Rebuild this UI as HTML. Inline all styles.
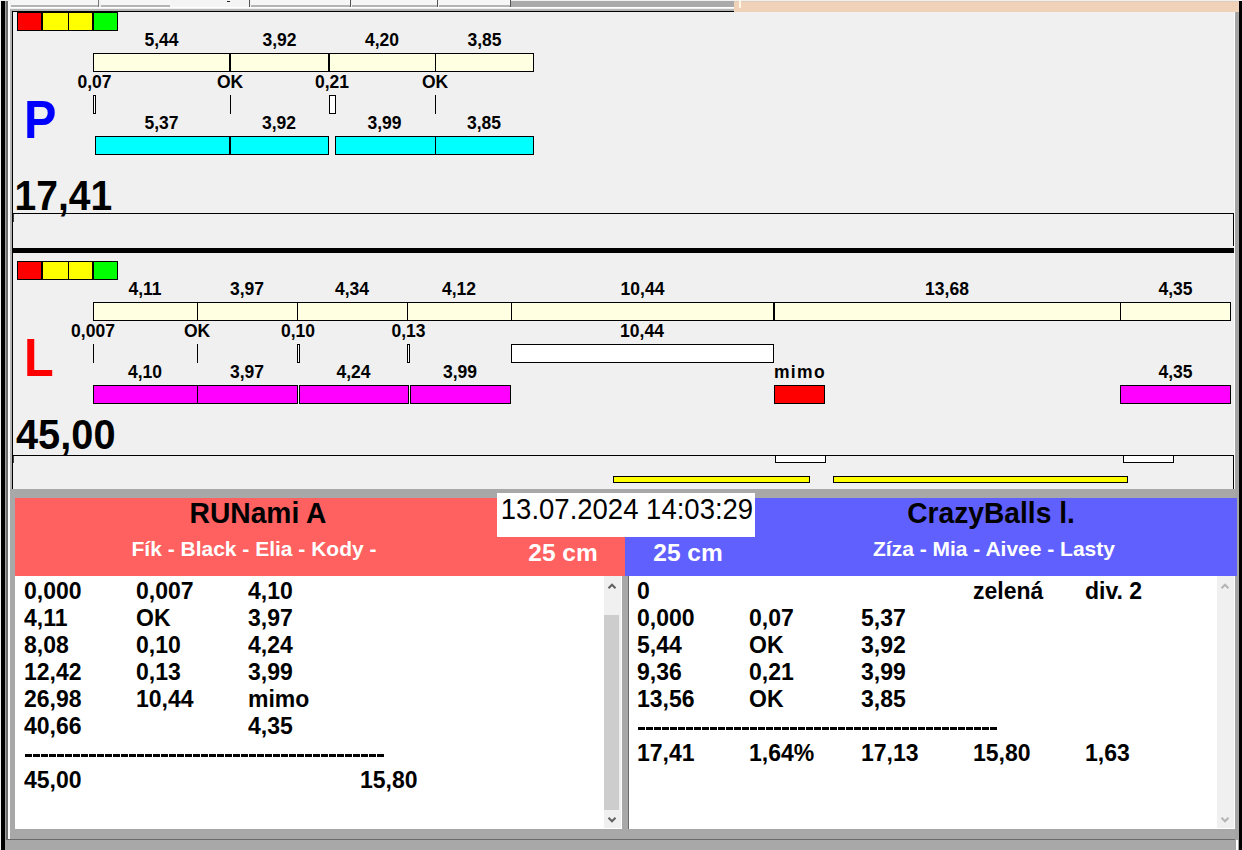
<!DOCTYPE html>
<html><head><meta charset="utf-8"><style>
html,body{margin:0;padding:0;}
body{width:1242px;height:850px;overflow:hidden;position:relative;background:#f0f0f0;font-family:"Liberation Sans", sans-serif;}
body>div,body>svg{position:absolute;}
.t{white-space:pre;}
</style></head><body>
<div style="left:0px;top:0px;width:1242px;height:850px;background:#f0f0f0;"></div>
<div style="left:0px;top:0px;width:1242px;height:7px;background:#f0f0f0;"></div>
<div style="left:11px;top:0px;width:87px;height:5px;background:#f6f6f6;"></div>
<div style="left:11px;top:5px;width:87px;height:2px;background:#b4b4b4;"></div>
<div style="left:101px;top:0px;width:69px;height:5px;background:#f6f6f6;"></div>
<div style="left:101px;top:5px;width:69px;height:2px;background:#b4b4b4;"></div>
<div style="left:251px;top:0px;width:99px;height:5px;background:#f6f6f6;"></div>
<div style="left:251px;top:5px;width:99px;height:2px;background:#b4b4b4;"></div>
<div style="left:352px;top:0px;width:85px;height:5px;background:#f6f6f6;"></div>
<div style="left:352px;top:5px;width:85px;height:2px;background:#b4b4b4;"></div>
<div style="left:439px;top:0px;width:71px;height:5px;background:#f6f6f6;"></div>
<div style="left:439px;top:5px;width:71px;height:2px;background:#b4b4b4;"></div>
<div style="left:98px;top:0px;width:1px;height:7px;background:#777;"></div>
<div style="left:170px;top:0px;width:80px;height:7px;background:#f4f4f4;"></div>
<div style="left:249px;top:0px;width:1px;height:7px;background:#555;"></div>
<div style="left:227px;top:1px;width:3px;height:1px;background:#222;"></div>
<div style="left:350px;top:0px;width:1px;height:7px;background:#555;"></div>
<div style="left:437px;top:0px;width:1px;height:7px;background:#555;"></div>
<div style="left:510px;top:0px;width:1px;height:7px;background:#555;"></div>
<div style="left:511px;top:1px;width:223px;height:6px;background:#aaaaaa;"></div>
<div style="left:9px;top:7px;width:725px;height:1px;background:#ffffff;"></div>
<div style="left:9px;top:9px;width:725px;height:2px;background:#b4b4b4;"></div>
<div style="left:12px;top:11px;width:722px;height:1px;background:#000;"></div>
<div style="left:734px;top:1px;width:505px;height:11px;background:#f0d2b8;"></div>
<div style="left:734px;top:1px;width:505px;height:1px;background:#e0cdb8;"></div>
<div style="left:739px;top:0px;width:2px;height:8px;background:#fff6e6;"></div>
<div style="left:1px;top:1px;width:4px;height:849px;background:#000;"></div>
<div style="left:5px;top:1px;width:1px;height:849px;background:#a0a0a0;"></div>
<div style="left:6px;top:1px;width:2px;height:849px;background:#6e6e6e;"></div>
<div style="left:8px;top:1px;width:2px;height:849px;background:#ffffff;"></div>
<div style="left:10px;top:9px;width:2px;height:480px;background:#b4b4b4;"></div>
<div style="left:12px;top:11px;width:1px;height:478px;background:#000;"></div>
<div style="left:1234px;top:12px;width:1px;height:838px;background:#ffffff;"></div>
<div style="left:1235px;top:12px;width:4px;height:838px;background:#a4a4a4;"></div>
<div style="left:1239px;top:1px;width:3px;height:849px;background:#000;"></div>
<div style="left:17px;top:12px;width:25px;height:19px;background:#ff0000;border:1px solid #000;box-sizing:border-box;"></div>
<div style="left:42px;top:12px;width:27px;height:19px;background:#ffff00;border:1px solid #000;box-sizing:border-box;"></div>
<div style="left:68px;top:12px;width:25px;height:19px;background:#ffff00;border:1px solid #000;box-sizing:border-box;"></div>
<div style="left:93px;top:12px;width:25px;height:19px;background:#00ff00;border:1px solid #000;box-sizing:border-box;"></div>
<div style="left:93px;top:53px;width:441px;height:19px;background:#ffffe1;border:1px solid #000;box-sizing:border-box;"></div>
<div style="left:229px;top:53px;width:2px;height:19px;background:#000;"></div>
<div style="left:328px;top:53px;width:2px;height:19px;background:#000;"></div>
<div style="left:435px;top:53px;width:1px;height:19px;background:#000;"></div>
<div class="t" style="left:11.50px;top:31.79px;font-size:17.5px;line-height:17.5px;color:#000;font-weight:bold;width:300px;text-align:center;">5,44</div>
<div class="t" style="left:129.50px;top:31.79px;font-size:17.5px;line-height:17.5px;color:#000;font-weight:bold;width:300px;text-align:center;">3,92</div>
<div class="t" style="left:232.00px;top:31.79px;font-size:17.5px;line-height:17.5px;color:#000;font-weight:bold;width:300px;text-align:center;">4,20</div>
<div class="t" style="left:334.50px;top:31.79px;font-size:17.5px;line-height:17.5px;color:#000;font-weight:bold;width:300px;text-align:center;">3,85</div>
<div class="t" style="left:-55.50px;top:73.79px;font-size:17.5px;line-height:17.5px;color:#000;font-weight:bold;width:300px;text-align:center;">0,07</div>
<div class="t" style="left:80.00px;top:73.79px;font-size:17.5px;line-height:17.5px;color:#000;font-weight:bold;width:300px;text-align:center;">OK</div>
<div class="t" style="left:182.00px;top:73.79px;font-size:17.5px;line-height:17.5px;color:#000;font-weight:bold;width:300px;text-align:center;">0,21</div>
<div class="t" style="left:285.00px;top:73.79px;font-size:17.5px;line-height:17.5px;color:#000;font-weight:bold;width:300px;text-align:center;">OK</div>
<div style="left:93px;top:95px;width:3px;height:19px;background:#fff;border:1px solid #000;box-sizing:border-box;"></div>
<div style="left:230px;top:95px;width:1px;height:19px;background:#000;"></div>
<div style="left:329px;top:95px;width:7px;height:19px;background:#fff;border:1px solid #000;box-sizing:border-box;"></div>
<div style="left:435px;top:95px;width:1px;height:19px;background:#000;"></div>
<div class="t" style="left:11.50px;top:114.79px;font-size:17.5px;line-height:17.5px;color:#000;font-weight:bold;width:300px;text-align:center;">5,37</div>
<div class="t" style="left:129.00px;top:114.79px;font-size:17.5px;line-height:17.5px;color:#000;font-weight:bold;width:300px;text-align:center;">3,92</div>
<div class="t" style="left:234.50px;top:114.79px;font-size:17.5px;line-height:17.5px;color:#000;font-weight:bold;width:300px;text-align:center;">3,99</div>
<div class="t" style="left:334.00px;top:114.79px;font-size:17.5px;line-height:17.5px;color:#000;font-weight:bold;width:300px;text-align:center;">3,85</div>
<div style="left:95px;top:136px;width:234px;height:19px;background:#00ffff;border:1px solid #000;box-sizing:border-box;"></div>
<div style="left:229px;top:136px;width:2px;height:19px;background:#000;"></div>
<div style="left:335px;top:136px;width:199px;height:19px;background:#00ffff;border:1px solid #000;box-sizing:border-box;"></div>
<div style="left:435px;top:136px;width:1px;height:19px;background:#000;"></div>
<div class="t" style="left:23.50px;top:92.29px;font-size:54px;line-height:54px;color:#0000ff;font-weight:bold;transform:scale(0.9,1);transform-origin:0 45.71px;">P</div>
<div class="t" style="left:14.50px;top:176.99px;font-size:39px;line-height:39px;color:#000;font-weight:bold;transform:scale(1.0,1.07);transform-origin:0 33.01px;">17,41</div>
<div style="left:13px;top:213px;width:1221px;height:1px;background:#000;"></div>
<div style="left:1233px;top:213px;width:1px;height:33px;background:#000;"></div>
<div style="left:13px;top:214px;width:1px;height:8px;background:#444;"></div>
<div style="left:13px;top:248px;width:1221px;height:5px;background:#000;"></div>
<div style="left:17px;top:261px;width:25px;height:19px;background:#ff0000;border:1px solid #000;box-sizing:border-box;"></div>
<div style="left:42px;top:261px;width:27px;height:19px;background:#ffff00;border:1px solid #000;box-sizing:border-box;"></div>
<div style="left:68px;top:261px;width:25px;height:19px;background:#ffff00;border:1px solid #000;box-sizing:border-box;"></div>
<div style="left:93px;top:261px;width:25px;height:19px;background:#00ff00;border:1px solid #000;box-sizing:border-box;"></div>
<div style="left:93px;top:302px;width:1138px;height:19px;background:#ffffe1;border:1px solid #000;box-sizing:border-box;"></div>
<div style="left:197px;top:302px;width:1px;height:19px;background:#000;"></div>
<div style="left:297px;top:302px;width:1px;height:19px;background:#000;"></div>
<div style="left:407px;top:302px;width:1px;height:19px;background:#000;"></div>
<div style="left:511px;top:302px;width:1px;height:19px;background:#000;"></div>
<div style="left:1120px;top:302px;width:1px;height:19px;background:#000;"></div>
<div style="left:773px;top:302px;width:2px;height:19px;background:#000;"></div>
<div class="t" style="left:-5.00px;top:280.79px;font-size:17.5px;line-height:17.5px;color:#000;font-weight:bold;width:300px;text-align:center;">4,11</div>
<div class="t" style="left:97.00px;top:280.79px;font-size:17.5px;line-height:17.5px;color:#000;font-weight:bold;width:300px;text-align:center;">3,97</div>
<div class="t" style="left:202.00px;top:280.79px;font-size:17.5px;line-height:17.5px;color:#000;font-weight:bold;width:300px;text-align:center;">4,34</div>
<div class="t" style="left:309.00px;top:280.79px;font-size:17.5px;line-height:17.5px;color:#000;font-weight:bold;width:300px;text-align:center;">4,12</div>
<div class="t" style="left:492.50px;top:280.79px;font-size:17.5px;line-height:17.5px;color:#000;font-weight:bold;width:300px;text-align:center;">10,44</div>
<div class="t" style="left:797.00px;top:280.79px;font-size:17.5px;line-height:17.5px;color:#000;font-weight:bold;width:300px;text-align:center;">13,68</div>
<div class="t" style="left:1025.50px;top:280.79px;font-size:17.5px;line-height:17.5px;color:#000;font-weight:bold;width:300px;text-align:center;">4,35</div>
<div class="t" style="left:-57.00px;top:322.79px;font-size:17.5px;line-height:17.5px;color:#000;font-weight:bold;width:300px;text-align:center;">0,007</div>
<div class="t" style="left:47.00px;top:322.79px;font-size:17.5px;line-height:17.5px;color:#000;font-weight:bold;width:300px;text-align:center;">OK</div>
<div class="t" style="left:148.00px;top:322.79px;font-size:17.5px;line-height:17.5px;color:#000;font-weight:bold;width:300px;text-align:center;">0,10</div>
<div class="t" style="left:258.50px;top:322.79px;font-size:17.5px;line-height:17.5px;color:#000;font-weight:bold;width:300px;text-align:center;">0,13</div>
<div class="t" style="left:492.00px;top:322.79px;font-size:17.5px;line-height:17.5px;color:#000;font-weight:bold;width:300px;text-align:center;">10,44</div>
<div style="left:93px;top:344px;width:1px;height:19px;background:#000;"></div>
<div style="left:197px;top:344px;width:1px;height:19px;background:#000;"></div>
<div style="left:297px;top:344px;width:3px;height:19px;background:#fff;border:1px solid #000;box-sizing:border-box;"></div>
<div style="left:407px;top:344px;width:3px;height:19px;background:#fff;border:1px solid #000;box-sizing:border-box;"></div>
<div style="left:511px;top:344px;width:263px;height:19px;background:#fff;border:1px solid #000;box-sizing:border-box;"></div>
<div class="t" style="left:-5.00px;top:363.79px;font-size:17.5px;line-height:17.5px;color:#000;font-weight:bold;width:300px;text-align:center;">4,10</div>
<div class="t" style="left:97.00px;top:363.79px;font-size:17.5px;line-height:17.5px;color:#000;font-weight:bold;width:300px;text-align:center;">3,97</div>
<div class="t" style="left:203.50px;top:363.79px;font-size:17.5px;line-height:17.5px;color:#000;font-weight:bold;width:300px;text-align:center;">4,24</div>
<div class="t" style="left:310.00px;top:363.79px;font-size:17.5px;line-height:17.5px;color:#000;font-weight:bold;width:300px;text-align:center;">3,99</div>
<div class="t" style="left:1025.50px;top:363.79px;font-size:17.5px;line-height:17.5px;color:#000;font-weight:bold;width:300px;text-align:center;">4,35</div>
<div class="t" style="left:774.00px;top:363.79px;font-size:17.5px;line-height:17.5px;color:#000;font-weight:bold;letter-spacing:1.3px;">mimo</div>
<div style="left:93px;top:385px;width:105px;height:19px;background:#ff00ff;border:1px solid #000;box-sizing:border-box;"></div>
<div style="left:197px;top:385px;width:101px;height:19px;background:#ff00ff;border:1px solid #000;box-sizing:border-box;"></div>
<div style="left:299px;top:385px;width:110px;height:19px;background:#ff00ff;border:1px solid #000;box-sizing:border-box;"></div>
<div style="left:410px;top:385px;width:101px;height:19px;background:#ff00ff;border:1px solid #000;box-sizing:border-box;"></div>
<div style="left:774px;top:385px;width:51px;height:19px;background:#ff0000;border:1px solid #000;box-sizing:border-box;"></div>
<div style="left:1120px;top:385px;width:111px;height:19px;background:#ff00ff;border:1px solid #000;box-sizing:border-box;"></div>
<div class="t" style="left:24.00px;top:330.29px;font-size:54px;line-height:54px;color:#ff0000;font-weight:bold;transform:scale(0.9,1);transform-origin:0 45.71px;">L</div>
<div class="t" style="left:15.50px;top:416.49px;font-size:39px;line-height:39px;color:#000;font-weight:bold;transform:scale(1.02,1.07);transform-origin:0 33.01px;">45,00</div>
<div style="left:13px;top:455px;width:1221px;height:1px;background:#000;"></div>
<div style="left:1233px;top:455px;width:1px;height:34px;background:#000;"></div>
<div style="left:13px;top:456px;width:1px;height:7px;background:#444;"></div>
<div style="left:775px;top:455px;width:51px;height:8px;background:#fff;border:1px solid #000;box-sizing:border-box;"></div>
<div style="left:1123px;top:455px;width:51px;height:8px;background:#fff;border:1px solid #000;box-sizing:border-box;"></div>
<div style="left:613px;top:476px;width:197px;height:7px;background:#ffff00;border:1px solid #000;box-sizing:border-box;"></div>
<div style="left:833px;top:476px;width:295px;height:7px;background:#ffff00;border:1px solid #000;box-sizing:border-box;"></div>
<div style="left:10px;top:489px;width:1225px;height:9px;background:#a8a8a8;"></div>
<div style="left:10px;top:489px;width:5px;height:351px;background:#a8a8a8;"></div>
<div style="left:10px;top:829px;width:1225px;height:11px;background:#a8a8a8;"></div>
<div style="left:15px;top:828px;width:1219px;height:1px;background:#ffffff;"></div>
<div style="left:8px;top:839px;width:1227px;height:1px;background:#6a6a6a;"></div>
<div style="left:5px;top:840px;width:1230px;height:10px;background:#a8a8a8;"></div>
<div style="left:1236px;top:840px;width:2px;height:10px;background:#ffffff;"></div>
<div style="left:15px;top:498px;width:610px;height:78px;background:#ff6060;"></div>
<div style="left:625px;top:498px;width:612px;height:78px;background:#6060ff;"></div>
<div class="t" style="left:58.00px;top:499.13px;font-size:28.2px;line-height:28.2px;color:#000;font-weight:bold;width:400px;text-align:center;transform:scale(1,1.03);transform-origin:50% 23.87px;">RUNami A</div>
<div class="t" style="left:54.00px;top:537.72px;font-size:21px;line-height:21px;color:#ffffff;font-weight:bold;width:400px;text-align:center;">Fík - Black - Elia - Kody -</div>
<div class="t" style="left:463.00px;top:540.76px;font-size:24.5px;line-height:24.5px;color:#ffffff;font-weight:bold;width:200px;text-align:center;">25 cm</div>
<div class="t" style="left:791.00px;top:499.13px;font-size:28.2px;line-height:28.2px;color:#000;font-weight:bold;width:400px;text-align:center;transform:scale(1,1.03);transform-origin:50% 23.87px;">CrazyBalls l.</div>
<div class="t" style="left:794.00px;top:538.22px;font-size:21px;line-height:21px;color:#ffffff;font-weight:bold;width:400px;text-align:center;">Zíza - Mia - Aivee - Lasty</div>
<div class="t" style="left:588.00px;top:540.76px;font-size:24.5px;line-height:24.5px;color:#ffffff;font-weight:bold;width:200px;text-align:center;">25 cm</div>
<div style="left:497px;top:493px;width:258px;height:44px;background:#ffffff;"></div>
<div class="t" style="left:477.00px;top:495.72px;font-size:27.5px;line-height:27.5px;color:#000;font-weight:normal;width:300px;text-align:center;transform:scale(1,1.04);transform-origin:50% 23.28px;">13.07.2024 14:03:29</div>
<div style="left:15px;top:576px;width:589px;height:252px;background:#ffffff;"></div>
<div style="left:604px;top:576px;width:17px;height:252px;background:#f0f0f0;"></div>
<div style="left:604px;top:615px;width:15px;height:195px;background:#cdcdcd;"></div>
<div style="left:621px;top:576px;width:1px;height:252px;background:#ffffff;"></div>
<div style="left:622px;top:576px;width:6px;height:253px;background:#a8a8a8;"></div>
<div style="left:628px;top:576px;width:1px;height:253px;background:#6a6a6a;"></div>
<div style="left:629px;top:576px;width:588px;height:252px;background:#ffffff;"></div>
<div style="left:1217px;top:576px;width:17px;height:252px;background:#f0f0f0;"></div>
<svg style="left:605.5px;top:579.5px;width:12px;height:12px" width="12" height="12" viewBox="-6 -6 12 12"><path d="M-3.5 2.2 L0 -1.3 L3.5 2.2" fill="none" stroke="#606060" stroke-width="2"/></svg>
<svg style="left:605.5px;top:814px;width:12px;height:12px" width="12" height="12" viewBox="-6 -6 12 12"><path d="M-3.5 -2.2 L0 1.3 L3.5 -2.2" fill="none" stroke="#606060" stroke-width="2"/></svg>
<svg style="left:1219px;top:579.5px;width:12px;height:12px" width="12" height="12" viewBox="-6 -6 12 12"><path d="M-3.5 2.2 L0 -1.3 L3.5 2.2" fill="none" stroke="#b4b4b4" stroke-width="2"/></svg>
<svg style="left:1219px;top:814px;width:12px;height:12px" width="12" height="12" viewBox="-6 -6 12 12"><path d="M-3.5 -2.2 L0 1.3 L3.5 -2.2" fill="none" stroke="#b4b4b4" stroke-width="2"/></svg>
<div class="t" style="left:24.00px;top:579.53px;font-size:23px;line-height:23px;color:#000;font-weight:bold;">0,000</div>
<div class="t" style="left:136.00px;top:579.53px;font-size:23px;line-height:23px;color:#000;font-weight:bold;">0,007</div>
<div class="t" style="left:248.00px;top:579.53px;font-size:23px;line-height:23px;color:#000;font-weight:bold;">4,10</div>
<div class="t" style="left:24.00px;top:606.53px;font-size:23px;line-height:23px;color:#000;font-weight:bold;">4,11</div>
<div class="t" style="left:136.00px;top:606.53px;font-size:23px;line-height:23px;color:#000;font-weight:bold;">OK</div>
<div class="t" style="left:248.00px;top:606.53px;font-size:23px;line-height:23px;color:#000;font-weight:bold;">3,97</div>
<div class="t" style="left:24.00px;top:633.53px;font-size:23px;line-height:23px;color:#000;font-weight:bold;">8,08</div>
<div class="t" style="left:136.00px;top:633.53px;font-size:23px;line-height:23px;color:#000;font-weight:bold;">0,10</div>
<div class="t" style="left:248.00px;top:633.53px;font-size:23px;line-height:23px;color:#000;font-weight:bold;">4,24</div>
<div class="t" style="left:24.00px;top:660.53px;font-size:23px;line-height:23px;color:#000;font-weight:bold;">12,42</div>
<div class="t" style="left:136.00px;top:660.53px;font-size:23px;line-height:23px;color:#000;font-weight:bold;">0,13</div>
<div class="t" style="left:248.00px;top:660.53px;font-size:23px;line-height:23px;color:#000;font-weight:bold;">3,99</div>
<div class="t" style="left:24.00px;top:687.53px;font-size:23px;line-height:23px;color:#000;font-weight:bold;">26,98</div>
<div class="t" style="left:136.00px;top:687.53px;font-size:23px;line-height:23px;color:#000;font-weight:bold;">10,44</div>
<div class="t" style="left:248.00px;top:687.53px;font-size:23px;line-height:23px;color:#000;font-weight:bold;">mimo</div>
<div class="t" style="left:24.00px;top:714.53px;font-size:23px;line-height:23px;color:#000;font-weight:bold;">40,66</div>
<div class="t" style="left:248.00px;top:714.53px;font-size:23px;line-height:23px;color:#000;font-weight:bold;">4,35</div>
<div style="left:25px;top:754px;width:359px;height:3px;background:repeating-linear-gradient(90deg,#000 0 7px,transparent 7px 8px);"></div>
<div class="t" style="left:24.00px;top:768.53px;font-size:23px;line-height:23px;color:#000;font-weight:bold;">45,00</div>
<div class="t" style="left:360.00px;top:768.53px;font-size:23px;line-height:23px;color:#000;font-weight:bold;">15,80</div>
<div class="t" style="left:637.00px;top:579.53px;font-size:23px;line-height:23px;color:#000;font-weight:bold;">0</div>
<div class="t" style="left:973.00px;top:579.53px;font-size:23px;line-height:23px;color:#000;font-weight:bold;">zelená</div>
<div class="t" style="left:1085.00px;top:579.53px;font-size:23px;line-height:23px;color:#000;font-weight:bold;">div. 2</div>
<div class="t" style="left:637.00px;top:606.53px;font-size:23px;line-height:23px;color:#000;font-weight:bold;">0,000</div>
<div class="t" style="left:749.00px;top:606.53px;font-size:23px;line-height:23px;color:#000;font-weight:bold;">0,07</div>
<div class="t" style="left:861.00px;top:606.53px;font-size:23px;line-height:23px;color:#000;font-weight:bold;">5,37</div>
<div class="t" style="left:637.00px;top:633.53px;font-size:23px;line-height:23px;color:#000;font-weight:bold;">5,44</div>
<div class="t" style="left:749.00px;top:633.53px;font-size:23px;line-height:23px;color:#000;font-weight:bold;">OK</div>
<div class="t" style="left:861.00px;top:633.53px;font-size:23px;line-height:23px;color:#000;font-weight:bold;">3,92</div>
<div class="t" style="left:637.00px;top:660.53px;font-size:23px;line-height:23px;color:#000;font-weight:bold;">9,36</div>
<div class="t" style="left:749.00px;top:660.53px;font-size:23px;line-height:23px;color:#000;font-weight:bold;">0,21</div>
<div class="t" style="left:861.00px;top:660.53px;font-size:23px;line-height:23px;color:#000;font-weight:bold;">3,99</div>
<div class="t" style="left:637.00px;top:687.53px;font-size:23px;line-height:23px;color:#000;font-weight:bold;">13,56</div>
<div class="t" style="left:749.00px;top:687.53px;font-size:23px;line-height:23px;color:#000;font-weight:bold;">OK</div>
<div class="t" style="left:861.00px;top:687.53px;font-size:23px;line-height:23px;color:#000;font-weight:bold;">3,85</div>
<div style="left:638px;top:727px;width:359px;height:3px;background:repeating-linear-gradient(90deg,#000 0 7px,transparent 7px 8px);"></div>
<div class="t" style="left:637.00px;top:741.53px;font-size:23px;line-height:23px;color:#000;font-weight:bold;">17,41</div>
<div class="t" style="left:749.00px;top:741.53px;font-size:23px;line-height:23px;color:#000;font-weight:bold;">1,64%</div>
<div class="t" style="left:861.00px;top:741.53px;font-size:23px;line-height:23px;color:#000;font-weight:bold;">17,13</div>
<div class="t" style="left:973.00px;top:741.53px;font-size:23px;line-height:23px;color:#000;font-weight:bold;">15,80</div>
<div class="t" style="left:1085.00px;top:741.53px;font-size:23px;line-height:23px;color:#000;font-weight:bold;">1,63</div>
</body></html>
